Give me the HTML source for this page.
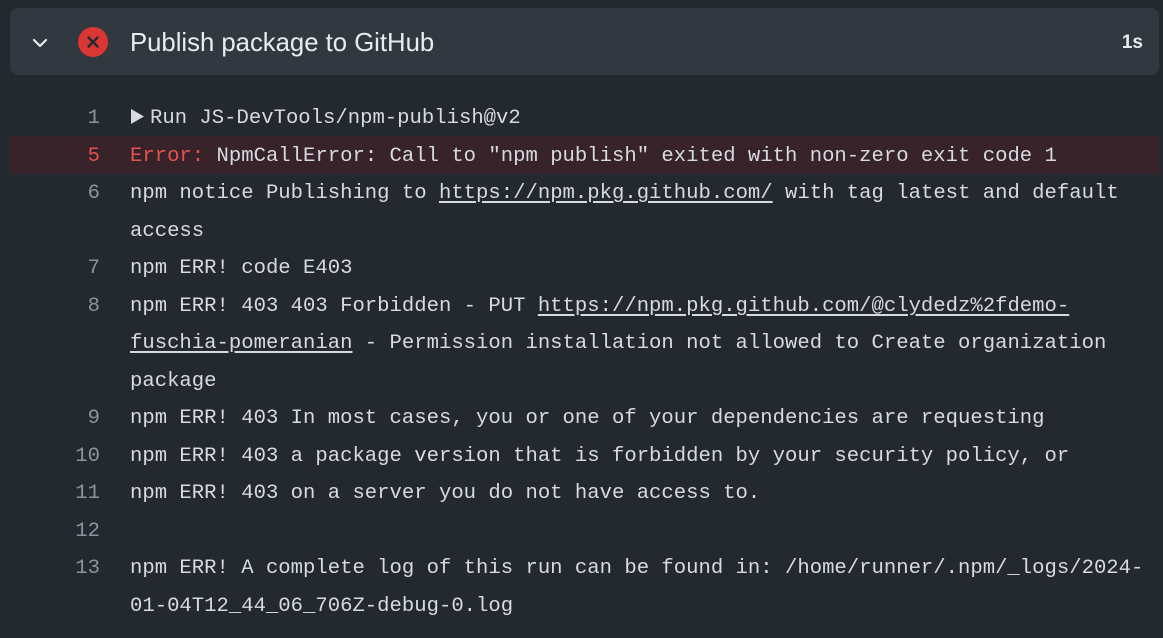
<!DOCTYPE html>
<html><head><meta charset="utf-8"><style>
html,body{margin:0;padding:0;background:#24292f;width:1163px;height:638px;overflow:hidden}
.hdr{position:absolute;left:10px;top:8px;width:1149px;height:67px;background:#32383f;border-radius:8px}
.title{position:absolute;left:130px;top:27px;font:25.7px "Liberation Sans",sans-serif;color:#e6edf3;line-height:32px}
.dur{position:absolute;right:20px;top:31px;font:bold 19px "Liberation Sans",sans-serif;color:#e6edf3;line-height:24px}
.l{position:absolute;left:0;width:1163px;height:37.5px;font:20.6px/37.5px "Liberation Mono",monospace;color:#d6dbe0;white-space:pre;padding-top:2px;box-sizing:border-box}
.n{position:absolute;right:1063px;color:#8b949e;text-align:right}
.t{position:absolute;left:130px}
.err{background:#372329;left:10px;width:1149px;padding-top:0}
.err .n{right:1059px;color:#e5534b;top:2px}
.err .t{left:120px;top:2px}
u{text-decoration:underline;text-underline-offset:3px}
</style></head><body>
<div class="hdr"></div>
<svg style="position:absolute;left:30px;top:33px" width="20" height="20" viewBox="0 0 20 20"><path d="M4 7l6 6 6-6" fill="none" stroke="#e6edf3" stroke-width="2.2" stroke-linecap="round" stroke-linejoin="round"/></svg>
<svg style="position:absolute;left:78px;top:27px" width="30" height="30" viewBox="0 0 30 30"><circle cx="15" cy="15" r="15" fill="#da3633"/><path d="M10.5 10.5l9 9M19.5 10.5l-9 9" stroke="#24292f" stroke-width="2.4" stroke-linecap="round"/></svg>
<div class="title">Publish package to GitHub</div>
<div class="dur">1s</div>

<svg style="position:absolute;left:131px;top:109px" width="14" height="15" viewBox="0 0 14 15"><path d="M0 0L13 7.5L0 15Z" fill="#d6dbe0"/></svg>
<div class="l" style="top:98px"><span class="n">1</span><span class="t" style="left:150px">Run JS-DevTools/npm-publish@v2</span></div>
<div class="l err" style="top:136px"><span class="n">5</span><span class="t"><span style="color:#e5534b">Error:</span> NpmCallError: Call to "npm publish" exited with non-zero exit code 1</span></div>
<div class="l" style="top:173px"><span class="n">6</span><span class="t">npm notice Publishing to <u>https://npm.pkg.github.com/</u> with tag latest and default</span></div>
<div class="l" style="top:211px"><span class="t">access</span></div>
<div class="l" style="top:248px"><span class="n">7</span><span class="t">npm ERR! code E403</span></div>
<div class="l" style="top:286px"><span class="n">8</span><span class="t">npm ERR! 403 403 Forbidden - PUT <u>https://npm.pkg.github.com/@clydedz%2fdemo-</u></span></div>
<div class="l" style="top:323px"><span class="t"><u>fuschia-pomeranian</u> - Permission installation not allowed to Create organization</span></div>
<div class="l" style="top:361px"><span class="t">package</span></div>
<div class="l" style="top:398px"><span class="n">9</span><span class="t">npm ERR! 403 In most cases, you or one of your dependencies are requesting</span></div>
<div class="l" style="top:436px"><span class="n">10</span><span class="t">npm ERR! 403 a package version that is forbidden by your security policy, or</span></div>
<div class="l" style="top:473px"><span class="n">11</span><span class="t">npm ERR! 403 on a server you do not have access to.</span></div>
<div class="l" style="top:511px"><span class="n">12</span></div>
<div class="l" style="top:548px"><span class="n">13</span><span class="t">npm ERR! A complete log of this run can be found in: /home/runner/.npm/_logs/2024-</span></div>
<div class="l" style="top:586px"><span class="t">01-04T12_44_06_706Z-debug-0.log</span></div>
</body></html>
